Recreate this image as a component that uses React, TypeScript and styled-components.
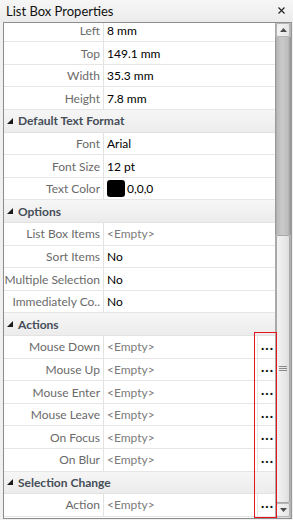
import React from 'react'
import styled, { createGlobalStyle } from 'styled-components'

const GlobalStyle = createGlobalStyle`
	html, body {
		margin: 0;
		padding: 0;
		background: #f0f0f0;
	}
	body {
		font-family: 'Lato', 'Noto Sans', sans-serif;
	}
`

type Prop = {
	label: string
	value: string
	empty?: boolean
	swatch?: boolean
	button?: boolean
}

type Section = {
	title?: string
	rows: Prop[]
}

const sections: Section[] = [
	{
		rows: [
			{ label: 'Left', value: '8 mm' },
			{ label: 'Top', value: '149.1 mm' },
			{ label: 'Width', value: '35.3 mm' },
			{ label: 'Height', value: '7.8 mm' },
		],
	},
	{
		title: 'Default Text Format',
		rows: [
			{ label: 'Font', value: 'Arial' },
			{ label: 'Font Size', value: '12 pt' },
			{ label: 'Text Color', value: '0,0,0', swatch: true },
		],
	},
	{
		title: 'Options',
		rows: [
			{ label: 'List Box Items', value: '<Empty>', empty: true },
			{ label: 'Sort Items', value: 'No' },
			{ label: 'Multiple Selection', value: 'No' },
			{ label: 'Immediately Co..', value: 'No' },
		],
	},
	{
		title: 'Actions',
		rows: [
			{ label: 'Mouse Down', value: '<Empty>', empty: true, button: true },
			{ label: 'Mouse Up', value: '<Empty>', empty: true, button: true },
			{ label: 'Mouse Enter', value: '<Empty>', empty: true, button: true },
			{ label: 'Mouse Leave', value: '<Empty>', empty: true, button: true },
			{ label: 'On Focus', value: '<Empty>', empty: true, button: true },
			{ label: 'On Blur', value: '<Empty>', empty: true, button: true },
		],
	},
	{
		title: 'Selection Change',
		rows: [{ label: 'Action', value: '<Empty>', empty: true, button: true }],
	},
]

const App: React.FC = () => {
	return (
		<>
			<GlobalStyle />
			<StyledPanel>
				<StyledTitleBar>
					<span>List Box Properties</span>
					<StyledClose>
						<svg width="7" height="7" viewBox="0 0 7 7">
							<path d="M0.5 0.5 L6.5 6.5 M6.5 0.5 L0.5 6.5" stroke="#222" strokeWidth="1.1" />
						</svg>
					</StyledClose>
				</StyledTitleBar>
				<StyledFrame>
					<StyledGridViewport>
						<StyledGrid>
							{sections.map((section, i) => (
								<React.Fragment key={i}>
									{section.title && (
										<StyledHeader>
											<svg width="6" height="6" viewBox="0 0 6 6">
												<polygon points="6,0 6,6 0,6" fill="#1a1a1a" />
											</svg>
											<span>{section.title}</span>
										</StyledHeader>
									)}
									{section.rows.map((row) => (
										<StyledRow key={row.label}>
											<StyledLabel>{row.label}</StyledLabel>
											<StyledValue $empty={row.empty}>
												{row.swatch && <StyledSwatch />}
												<span>{row.value}</span>
												{row.button && <StyledEllipsis>...</StyledEllipsis>}
											</StyledValue>
										</StyledRow>
									))}
								</React.Fragment>
							))}
						</StyledGrid>
					</StyledGridViewport>
					<StyledScrollbar>
						<StyledArrowButton>
							<svg width="7" height="4" viewBox="0 0 7 4">
								<polygon points="0,4 3.5,0 7,4" fill="#4d4d4d" />
							</svg>
						</StyledArrowButton>
						<StyledTrack />
						<StyledThumb>
							<svg width="8" height="6" viewBox="0 0 8 6">
								<path d="M0 0.5 H8 M0 2.5 H8 M0 4.5 H8" stroke="#8a8a8a" strokeWidth="1" />
							</svg>
						</StyledThumb>
						<StyledArrowButton $bottom>
							<svg width="7" height="4" viewBox="0 0 7 4">
								<polygon points="0,0 7,0 3.5,4" fill="#4d4d4d" />
							</svg>
						</StyledArrowButton>
					</StyledScrollbar>
					<StyledHighlight />
				</StyledFrame>
			</StyledPanel>
		</>
	)
}

const StyledPanel = styled.div`
	width: 293px;
	height: 520px;
	box-sizing: border-box;
	display: flex;
	flex-direction: column;
	padding: 0 1px 1px 3px;
	background: linear-gradient(#f6f6f6, #ececec 22px, #f0f0f0 22px);
	overflow: hidden;
`

const StyledTitleBar = styled.div`
	height: 22px;
	flex: 0 0 22px;
	display: flex;
	align-items: center;
	justify-content: space-between;
	padding: 0 7px 0 3px;
	font-size: 13px;
	color: #111;
`

const StyledClose = styled.span`
	display: flex;
	align-items: center;
	margin-top: -1px;
`

const StyledFrame = styled.div`
	position: relative;
	flex: 1;
	display: flex;
	border: 1px solid #8a8c8f;
	border-right-color: #9a9a9a;
	background: #fff;
	min-height: 0;
`

const StyledGridViewport = styled.div`
	flex: 1;
	overflow: hidden;
`

const StyledGrid = styled.div`
	margin-top: -3.3px;
	display: flex;
	flex-direction: column;
`

const StyledRow = styled.div`
	height: 22.6px;
	flex: 0 0 22.6px;
	box-sizing: border-box;
	display: flex;
	border-bottom: 1px solid #e6e6e6;
	font-size: 12px;
`

const StyledHeader = styled.div`
	height: 22.6px;
	flex: 0 0 22.6px;
	box-sizing: border-box;
	display: flex;
	align-items: center;
	gap: 5px;
	padding-left: 3px;
	background: linear-gradient(#f6f6f6, #ececec);
	border-bottom: 1px solid #e2e2e2;
	font-size: 12px;
	font-weight: 700;
	color: #454d57;
`

const StyledLabel = styled.div`
	width: 100px;
	flex: 0 0 100px;
	box-sizing: border-box;
	border-right: 1px solid #e2e2e2;
	display: flex;
	align-items: center;
	justify-content: flex-end;
	padding-right: 3px;
	color: #6a6a6a;
	white-space: nowrap;
	overflow: hidden;
`

const StyledValue = styled.div<{ $empty?: boolean }>`
	flex: 1;
	display: flex;
	align-items: center;
	padding-left: 3px;
	color: ${(p) => (p.$empty ? '#7b7b7b' : '#000')};
	white-space: nowrap;
`

const StyledSwatch = styled.span`
	width: 18px;
	height: 17px;
	border-radius: 3px;
	background: #000;
	margin-right: 2px;
`

const StyledEllipsis = styled.span`
	margin-left: auto;
	align-self: stretch;
	width: 18px;
	box-sizing: border-box;
	border-left: 1px solid #e6e6e6;
	display: flex;
	align-items: center;
	justify-content: center;
	font-size: 14px;
	font-weight: 900;
	letter-spacing: 1px;
	color: #111;
	padding: 0 0 5px 2px;
`

const StyledScrollbar = styled.div`
	width: 16px;
	flex: 0 0 16px;
	display: flex;
	flex-direction: column;
	background: linear-gradient(90deg, #9c9c9c, #cfcfcf 2px, #e6e6e6 8px, #d8d8d8 14px, #a6a6a6);
`

const StyledArrowButton = styled.div<{ $bottom?: boolean }>`
	height: 14px;
	flex: 0 0 14px;
	margin: ${(p) => (p.$bottom ? '0 1px 1px 1px' : '0 1px')};
	box-sizing: border-box;
	border: 1px solid #b5b5b5;
	border-radius: 2px;
	background: linear-gradient(90deg, #f4f4f4, #e6e6e6);
	display: flex;
	align-items: center;
	justify-content: center;
`

const StyledTrack = styled.div`
	height: 198px;
	flex: 0 0 198px;
	background: linear-gradient(90deg, #8f8f8f, #b9b9b9 2px, #cacaca 7px, #bdbdbd 13px, #8f8f8f);
`

const StyledThumb = styled.div`
	flex: 1;
	margin: 0 1px;
	box-sizing: border-box;
	border: 1px solid #a8a8a8;
	border-radius: 2px;
	background: linear-gradient(90deg, #f2f2f2, #e9e9e9 60%, #dedede);
	display: flex;
	align-items: center;
	justify-content: center;
`

const StyledHighlight = styled.div`
	position: absolute;
	left: 250px;
	top: 309px;
	width: 23px;
	height: 186px;
	box-sizing: border-box;
	border: 1px solid #e8141b;
	pointer-events: none;
`

export default App
